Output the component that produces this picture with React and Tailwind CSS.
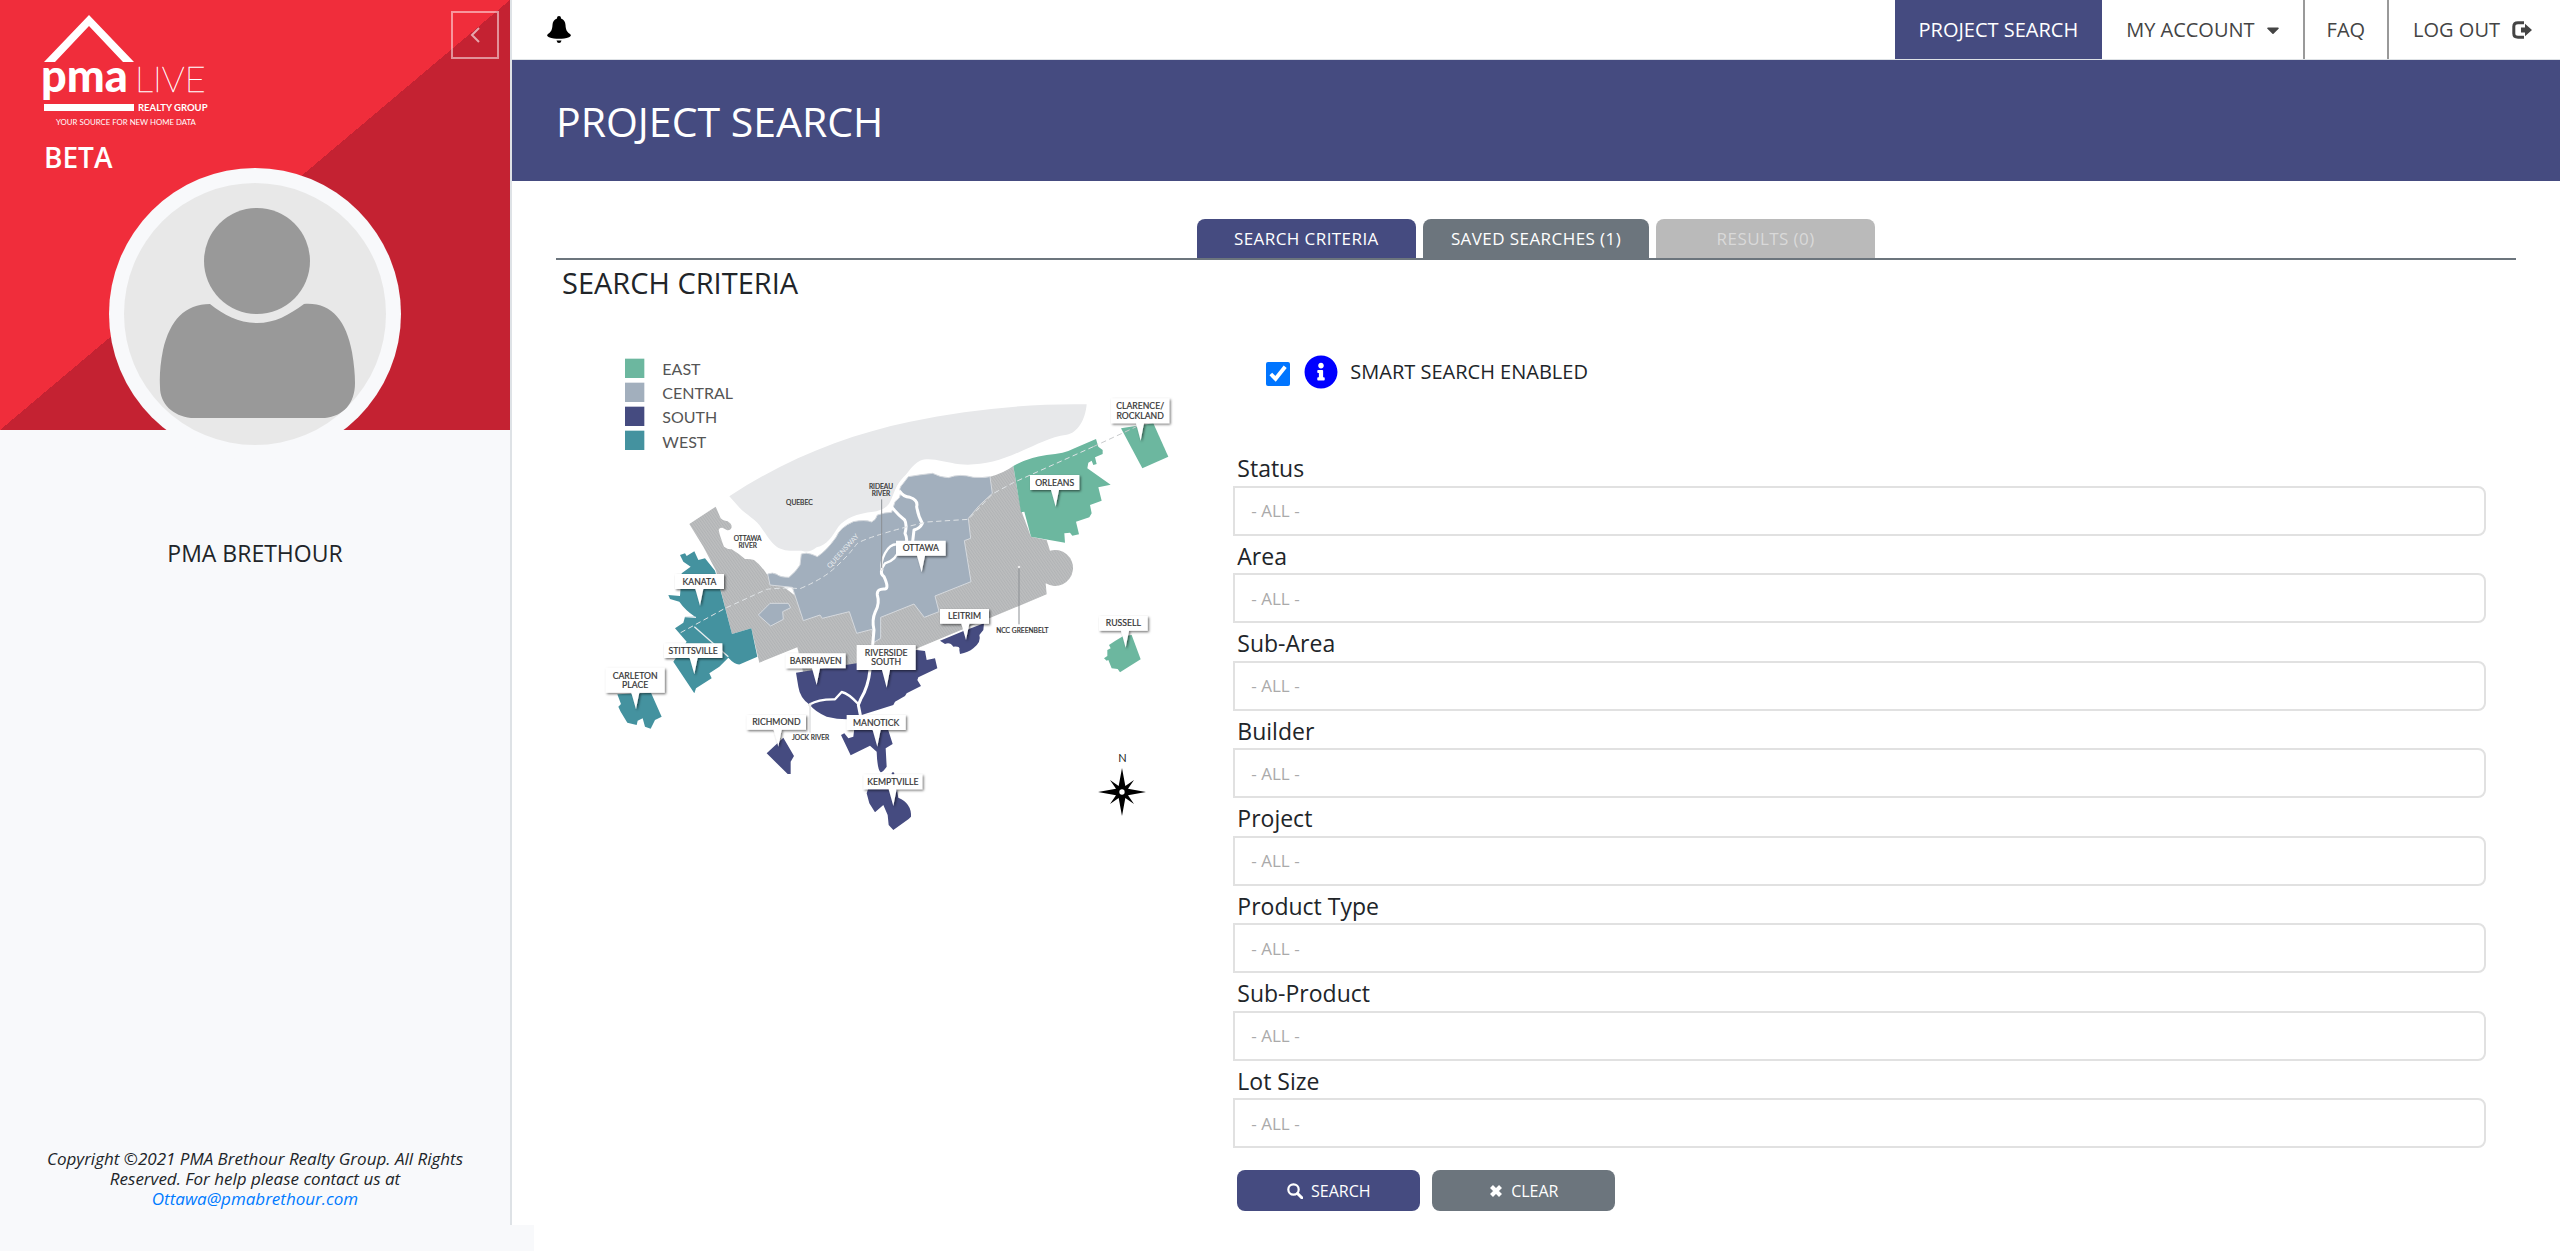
import { useState } from "react";
import { FaCaretDown, FaInfoCircle } from "react-icons/fa";

const navy = "#454b80";
const teal = "#44929f";
const green = "#6cb79f";
const slate = "#a2afbd";

const tabs = [
  { id: "criteria", label: "SEARCH CRITERIA", className: "bg-[#454b80] text-white" },
  { id: "saved", label: "SAVED SEARCHES (1)", className: "bg-[#6c757d] text-white" },
  { id: "results", label: "RESULTS (0)", className: "bg-[#bababa] text-[#d9d9d9]", disabled: true },
];

const fields = [
  { name: "status", label: "Status" },
  { name: "area", label: "Area" },
  { name: "subArea", label: "Sub-Area" },
  { name: "builder", label: "Builder" },
  { name: "project", label: "Project" },
  { name: "productType", label: "Product Type" },
  { name: "subProduct", label: "Sub-Product" },
  { name: "lotSize", label: "Lot Size" },
];

const emptyForm = Object.fromEntries(fields.map((f) => [f.name, ""]));

const legend = [
  { label: "EAST", color: green },
  { label: "CENTRAL", color: slate },
  { label: "SOUTH", color: navy },
  { label: "WEST", color: teal },
];

// x, y, width, height of the box, then the point of the pin
const pins = [
  { lines: ["CLARENCE/", "ROCKLAND"], box: [1563, 175, 175, 75], tip: [1652, 302] },
  { lines: ["ORLEANS"], box: [1320, 405, 148, 45], tip: [1397, 500] },
  { lines: ["OTTAWA"], box: [918, 602, 149, 45], tip: [995, 697] },
  { lines: ["LEITRIM"], box: [1050, 807, 147, 44], tip: [1128, 900] },
  { lines: ["RUSSELL"], box: [1527, 828, 146, 44], tip: [1607, 923] },
  { lines: ["KANATA"], box: [255, 702, 147, 45], tip: [330, 797] },
  { lines: ["STITTSVILLE"], box: [222, 910, 175, 44], tip: [313, 1003] },
  { lines: ["CARLETON", "PLACE"], box: [47, 983, 177, 75], tip: [138, 1108] },
  { lines: ["BARRHAVEN"], box: [587, 940, 180, 45], tip: [680, 1035] },
  { lines: ["RIVERSIDE", "SOUTH"], box: [800, 915, 177, 75], tip: [890, 1043] },
  { lines: ["RICHMOND"], box: [470, 1125, 178, 44], tip: [565, 1220] },
  { lines: ["MANOTICK"], box: [770, 1125, 177, 45], tip: [862, 1220] },
  { lines: ["KEMPTVILLE"], box: [820, 1303, 177, 45], tip: [910, 1398] },
];

function Pin({ lines, box, tip }) {
  const [x, y, w, h] = box;
  const [tx, ty] = tip;
  const first = y + h / 2 + 9 - (lines.length - 1) * 14;
  return (
    <g>
      <path
        d={`M${x} ${y}H${x + w}V${y + h}H${tx + 10}L${tx} ${ty}L${tx - 14} ${y + h}H${x}Z`}
        fill="#fff"
        filter="url(#pinShadow)"
      />
      {lines.map((line, i) => (
        <text key={line} x={x + w / 2} y={first + i * 28} textAnchor="middle" fontSize="26" fill="#333" stroke="#333" strokeWidth="0.6">
          {line}
        </text>
      ))}
    </g>
  );
}

function OttawaMap() {
  return (
    <svg viewBox="0 0 1770 1500" className="w-full max-w-[590px] font-[Lato,sans-serif]" role="img" aria-label="Ottawa areas">
      <defs>
        <pattern id="hatch" width="7" height="7" patternUnits="userSpaceOnUse" patternTransform="rotate(-35)">
          <rect width="7" height="7" fill="#bdbebf" />
          <rect width="3" height="7" fill="#b1b3b5" />
        </pattern>
        <filter id="pinShadow" x="-20%" y="-20%" width="150%" height="150%">
          <feDropShadow dx="4" dy="4" stdDeviation="3" floodColor="#000" floodOpacity="0.55" />
        </filter>
      </defs>

      {legend.map((item, i) => (
        <g key={item.label}>
          <rect x="105" y={56 + i * 72} width="58" height="58" fill={item.color} />
          <text x="217" y={104 + i * 73} fontSize="48" fill="#555">
            {item.label}
          </text>
        </g>
      ))}

      {/* Quebec */}
      <path
        fill="#e7e8ea"
        d="M418 469C590 355 770 285 960 245C1140 208 1320 190 1490 193C1486 240 1462 280 1430 284C1380 290 1340 314 1290 335C1230 363 1170 378 1110 373C1060 366 1020 350 990 362C965 375 958 395 940 412C918 435 912 460 902 482C893 502 875 512 850 515C800 520 765 535 745 560C725 592 712 614 680 622C660 638 650 636 635 632C610 633 580 634 560 620C540 605 530 585 515 565C500 540 470 525 450 505Z"
      />

      {/* Greenbelt */}
      <path
        fill="url(#hatch)"
        d="M298 552L377 500L392 535Q402 545 412 543Q426 552 425 562Q422 572 412 571L397 563Q388 562 386 570Q390 590 402 620Q412 628 425 628Q445 640 465 657Q480 656 492 660Q512 674 530 702L620 770L1100 600L1140 500L1200 410Q1240 400 1270 378L1282 450L1295 515L1323 590L1370 600L1380 632A54 54 0 1 1 1367 730L1370 763L975 928L870 960L775 980L640 1000L622 922L508 968L484 865L426 882L392 750L378 692L340 620Z"
      />

      {/* Ottawa */}
      <path
        fill={slate}
        stroke="#d5d9de"
        strokeWidth="3"
        d="M533 702Q548 696 560 703Q570 712 597 712Q618 695 630 675L634 642Q650 637 662 642Q672 645 682 650Q710 632 738 592Q750 562 790 545Q825 538 845 546Q858 540 862 525Q885 517 905 517L915 485Q932 475 932 460Q924 445 940 430L955 410Q990 404 1028 400Q1050 412 1075 413Q1110 400 1150 412Q1180 414 1200 410L1207 460Q1165 495 1135 535L1142 595L1123 602L1143 725L1035 768L1047 815L1003 832L972 792L872 832V895L850 908L846 868L800 880L778 815L697 835L690 825L640 842L607 742L540 735Z"
      />
      <path fill={slate} stroke="#d5d9de" strokeWidth="3" d="M505 825L540 790H595L602 803L578 815L580 838L542 858Z" />

      {/* West */}
      <g fill={teal}>
        <path d="M270 645L285 640L290 648L313 634L325 660L345 655L375 692L390 745L426 882L484 865L502 950L450 973Q435 975 415 953L388 980L358 1000L365 1015L318 1045L313 1060L250 965L290 905L255 865L280 848L285 830L315 830Q285 810 268 785L240 777L235 765L270 768L275 700L302 680L280 665Z" />
        <path d="M82 1063L183 1058L215 1130L195 1140L182 1166L165 1160L158 1135L143 1142L140 1155L112 1148L92 1115L85 1100L93 1092Z" />
      </g>
      <path d="M313 860L415 950" stroke="#e8eef0" strokeWidth="4" />
      <path d="M285 830L318 832" stroke="#e8eef0" strokeWidth="4" />

      {/* East */}
      <g fill={green}>
        <path d="M1270 378Q1315 352 1370 345Q1425 340 1450 326L1518 297L1525 320L1538 330V342L1515 352L1520 372L1510 375L1505 362L1495 368L1492 385L1562 434L1525 442L1535 482L1500 495L1505 520L1498 532L1458 545L1467 583L1447 587L1440 578L1423 580L1425 608L1323 590L1303 515L1293 517L1282 450Z" />
        <path d="M1593 265L1690 250L1735 350L1657 385Z" />
        <path d="M1625 885L1652 958L1590 997L1583 987L1565 985L1555 960L1550 962L1542 955L1552 948L1552 930L1562 925L1557 915L1575 903L1600 888Z" />
      </g>

      {/* South */}
      <g fill={navy}>
        <path d="M618 998L800 970L980 930L1005 933L1010 960L1035 955L1042 985L985 1012L982 1020L993 1038L950 1060L945 1068L915 1085L910 1095L815 1125L805 1135Q760 1142 710 1130Q675 1115 660 1095Q630 1075 625 1040Z" />
        <path d="M1050 902L1115 875L1182 850L1180 870L1168 885Q1175 905 1150 925Q1135 938 1110 942L1108 930Q1112 918 1090 920Q1080 905 1065 912Z" />
        <path d="M530 1240L580 1193L612 1248L602 1265V1302H593Z" />
        <path d="M753 1185L763 1180L775 1195L790 1190L793 1165H893L908 1212L887 1225L890 1280Q878 1297 872 1297Q862 1290 860 1235L840 1217L782 1246Z" />
        <path d="M830 1360L835 1345H920L925 1373Q965 1390 963 1430L956 1437L910 1470L896 1455L893 1425L880 1395L855 1417L838 1390Z" />
        <circle cx="909" cy="1301" r="4" />
      </g>

      {/* Rivers */}
      <g fill="none" stroke="#fff" strokeWidth="9" strokeLinejoin="round" strokeLinecap="round">
        <path d="M908 505Q925 525 944 540Q952 555 945 580Q955 600 945 620" />
        <path d="M930 455Q940 470 960 472Q985 480 980 500Q985 530 997 550Q990 565 972 570L968 605" />
        <path d="M925 613Q900 610 885 640Q872 665 875 687" strokeWidth="7" />
        <path d="M925 630Q920 660 885 670L875 687" strokeWidth="7" />
        <path d="M876 688Q870 700 882 710Q898 745 885 747Q860 745 862 765Q870 790 856 815Q845 840 852 870L848 915" />
        <path d="M840 990Q835 1040 812 1078L805 1095L811 1125" />
        <path d="M660 1093Q685 1077 735 1078L755 1056Q775 1060 805 1092" strokeWidth="7" />
      </g>

      {/* Queensway */}
      <g fill="none" stroke="#dfe3e6" strokeWidth="3" strokeDasharray="16 10">
        <path d="M272 878L405 805L530 748Q580 742 630 746Q680 725 715 700Q770 655 800 612Q820 595 960 558L1010 546L1135 538L1207 462L1270 428L1510 320" />
        <path d="M1510 320L1650 255" stroke="#c9cbcd" />
      </g>
      <text transform="translate(764 638) rotate(-48)" textAnchor="middle" fontSize="21" fill="#e8ebee">
        QUEENSWAY
      </text>

      <g fill="none" stroke="#8b8f93" strokeWidth="3">
        <path d="M875 478V684" />
        <path d="M1287 684V853" />
        <path d="M660 1100V1178" stroke="#d0d2d4" />
      </g>
      <g fill="#fff" stroke="#a6a8aa" strokeWidth="1">
        <circle cx="875" cy="687" r="4" />
        <circle cx="1287" cy="681" r="4" />
        <circle cx="660" cy="1095" r="4" />
      </g>

      <g fontSize="20" fill="#333" stroke="#333" strokeWidth="0.6" textAnchor="middle">
        <text x="628" y="494">QUEBEC</text>
        <text x="473" y="603">OTTAWA</text>
        <text x="473" y="624">RIVER</text>
        <text x="873" y="446">RIDEAU</text>
        <text x="873" y="467">RIVER</text>
        <text x="1297" y="879">NCC GREENBELT</text>
        <text x="662" y="1199">JOCK RIVER</text>
      </g>

      {pins.map((pin) => (
        <Pin key={pin.lines[0]} {...pin} />
      ))}

      {/* Compass */}
      <text x="1597" y="1266" textAnchor="middle" fontSize="33" fill="#222">
        N
      </text>
      <g transform="translate(1596 1356)">
        <path d="M0 -72L10 -18L36 -36L18 -10L72 0L18 10L36 36L10 18L0 72L-10 18L-36 36L-18 10L-72 0L-18 -10L-36 -36L-10 -18Z" />
        <circle r="8" fill="#fff" />
      </g>
    </svg>
  );
}

function Logo() {
  return (
    <svg viewBox="-4 0 176 114" className="w-44 font-[Lato,sans-serif]" fill="#fff" role="img" aria-label="PMA Live Realty Group">
      <path d="M0 47L45 0L90 47H79L45 11L11 47Z" />
      <text x="-3" y="77" fontSize="45" fontWeight="900">pma</text>
      <text x="91" y="77" fontSize="36" fontWeight="100" stroke="#fff" strokeWidth="0.4">LIVE</text>
      <rect x="0" y="89" width="90" height="7" />
      <text x="94" y="96" fontSize="9.500" fontWeight="700">REALTY GROUP</text>
      <text x="12" y="110" fontSize="7.800">YOUR SOURCE FOR NEW HOME DATA</text>
    </svg>
  );
}

function Avatar() {
  return (
    <svg viewBox="0 0 292 292" className="w-[292px]" role="img" aria-label="Profile">
      <circle cx="146" cy="146" r="146" fill="#f8f9fb" />
      <circle cx="146" cy="146" r="131" fill="#e8e8e8" />
      <circle cx="148" cy="93" r="53" fill="#999" />
      <path
        fill="#999"
        d="M101 136C115 147 130 155 148 155S180 147 195 136C222 134 237 152 243 184Q246 202 246 215C246 236 234 248 216 250H82C64 248 51 236 51 219Q50 202 54 182C61 152 76 136 101 136Z"
      />
    </svg>
  );
}

function BellIcon() {
  return (
    <svg viewBox="0 0 24 28" className="w-6" aria-hidden="true">
      <path d="M10 2.500C10 .8 10.700 0 12 0S14 .8 14 2.500C17 3.500 18.300 6 18.500 9C18.800 14 20 16 23 18C24.500 19 24 20.500 22 21.200C16 23.200 8 23.200 2 21.200C0 20.500 -.5 19 1 18C4 16 5.200 14 5.500 9C5.700 6 7 3.500 10 2.500Z" />
      <path d="M9.500 24.500H14.500Q14 27 12 27T9.500 24.500Z" />
    </svg>
  );
}

function LogOutIcon() {
  return (
    <svg viewBox="0 0 20 18" className="w-5" aria-hidden="true">
      <path d="M12 1.800H6Q1.800 1.800 1.800 5.500V12.500Q1.800 16.200 6 16.200H12" fill="none" stroke="currentColor" strokeWidth="3" />
      <path d="M9 6.500H13V2.800L20 9L13 15.200V11.500H9Z" fill="currentColor" />
    </svg>
  );
}

function SearchIcon() {
  return (
    <svg viewBox="0 0 16 16" className="w-4" fill="none" stroke="currentColor" aria-hidden="true">
      <circle cx="6.500" cy="6.500" r="5.200" strokeWidth="2.200" />
      <path d="M10.500 10.500L14.800 14.800" strokeWidth="3" strokeLinecap="round" />
    </svg>
  );
}

function ClearIcon() {
  return (
    <svg viewBox="0 0 14 14" className="w-3.5" aria-hidden="true">
      <path d="M2.500 2.500L11.500 11.500M11.500 2.500L2.500 11.500" stroke="currentColor" strokeWidth="4.200" />
    </svg>
  );
}

function Sidebar() {
  return (
    <aside className="flex w-1/5 flex-col border-r-2 border-[#dee2e6] bg-[#f8f9fb] text-[#212529]">
      <div className="h-[430px] bg-[linear-gradient(to_bottom_right,#f02d3b_50%,#c42232_50%)]">
        <div className="flex h-[157px] items-start justify-between pt-[11px] pr-[11px] pl-10">
          <a href="#home" className="mt-1 flex flex-col text-white">
            <Logo />
            <span className="mt-2 pl-1 text-[28px] leading-10 font-semibold">BETA</span>
          </a>
          <button type="button" aria-label="Collapse sidebar" className="flex size-12 items-center justify-center border-2 border-white/50 text-white/60">
            <svg viewBox="0 0 10 16" className="w-2.5" fill="none" stroke="currentColor" strokeWidth="2">
              <path d="M9 1L2 8L9 15" />
            </svg>
          </button>
        </div>
        <div className="mt-[11px] flex justify-center">
          <Avatar />
        </div>
      </div>
      <p className="mt-[107px] text-center text-[23px] leading-8">PMA BRETHOUR</p>
      <p className="mt-auto px-10 pb-4 text-center text-[17px] leading-5 italic">
        Copyright ©2021 PMA Brethour Realty Group. All Rights Reserved. For help please contact us at{" "}
        <a href="mailto:Ottawa@pmabrethour.com" className="text-[#007bff]">
          Ottawa@pmabrethour.com
        </a>
      </p>
    </aside>
  );
}

function TopBar() {
  return (
    <header className="flex h-15 items-stretch justify-between border-b border-[#dee2e6]">
      <button type="button" aria-label="Notifications" className="pl-[35px]">
        <BellIcon />
      </button>
      <nav className="flex text-[20px] text-[#444]">
        <a href="#search" className="flex items-center bg-[#454b80] px-6 text-white">
          PROJECT SEARCH
        </a>
        <button type="button" className="flex items-center gap-2 border-r-2 border-[#999] pr-5 pl-6">
          MY ACCOUNT
          <FaCaretDown className="size-5" />
        </button>
        <a href="#faq" className="flex items-center border-r-2 border-[#999] px-[22px]">
          FAQ
        </a>
        <a href="#logout" className="flex items-center gap-3 pr-7 pl-6">
          LOG OUT
          <LogOutIcon />
        </a>
      </nav>
    </header>
  );
}

function SearchForm() {
  const [values, setValues] = useState(emptyForm);
  const [smart, setSmart] = useState(true);

  const handleChange = (e) => {
    setValues({ ...values, [e.target.name]: e.target.value });
  };

  return (
    <form onSubmit={(e) => e.preventDefault()} className="pr-[30px] pl-6">
      <div className="flex h-[72px] items-center pl-[33px]">
        <input
          id="smart"
          type="checkbox"
          checked={smart}
          onChange={(e) => setSmart(e.target.checked)}
          className="mt-1 size-6 accent-[#0075ff]"
        />
        <FaInfoCircle className="ml-3.5 size-[34px] text-[#0000ff]" />
        <label htmlFor="smart" className="ml-3 text-[20px]">
          SMART SEARCH ENABLED
        </label>
      </div>

      <div className="mt-10">
        {fields.map((field) => (
          <div key={field.name}>
            <label htmlFor={field.name} className="block pt-[3px] pl-1 text-[23px] leading-normal">
              {field.label}
            </label>
            <input
              id={field.name}
              name={field.name}
              type="text"
              placeholder="- ALL -"
              value={values[field.name]}
              onChange={handleChange}
              className="block h-[50px] w-full rounded-r-lg border-2 border-[#e1e1e1] px-4 text-[17px] placeholder:text-[#aaa]"
            />
          </div>
        ))}
      </div>

      <div className="mt-[22px] flex gap-3 pl-1 text-[16px] font-medium text-white">
        <button type="submit" className="flex h-[41px] w-[183px] items-center justify-center gap-2 rounded-lg bg-[#454b80]">
          <SearchIcon />
          SEARCH
        </button>
        <button
          type="button"
          onClick={() => setValues(emptyForm)}
          className="flex h-[41px] w-[183px] items-center justify-center gap-2 rounded-lg bg-[#6c757d]"
        >
          <ClearIcon />
          CLEAR
        </button>
      </div>
    </form>
  );
}

export default function App() {
  return (
    <div className="flex min-h-screen flex-col bg-white font-['Open_Sans','Noto_Sans',sans-serif] text-[#212529]">
      <div className="flex flex-1">
        <Sidebar />
        <div className="flex-1">
          <TopBar />
          <div className="flex h-[121px] items-center bg-[#454b80] px-11">
            <h1 className="text-[41px] leading-[60px] text-white">PROJECT SEARCH</h1>
          </div>

          <main className="px-11 pt-[38px]">
            <div className="flex justify-center gap-[7px] border-b-2 border-[#6c757d]">
              {tabs.map((tab) => (
                <button
                  key={tab.id}
                  type="button"
                  disabled={tab.disabled}
                  className={`h-[39px] min-w-[219px] rounded-t-lg px-7 text-[17px] font-medium tracking-wide ${tab.className}`}
                >
                  {tab.label}
                </button>
              ))}
            </div>
            <h2 className="pt-0.5 pl-1.5 text-[29px] leading-[42px]">SEARCH CRITERIA</h2>
            <div className="mt-8 grid grid-cols-[1fr_2fr]">
              <div className="pt-1 pl-[34px]">
                <OttawaMap />
              </div>
              <SearchForm />
            </div>
          </main>
        </div>
      </div>
      <footer className="h-[26px] w-[534px] bg-[#f8f9fb]" />
    </div>
  );
}
